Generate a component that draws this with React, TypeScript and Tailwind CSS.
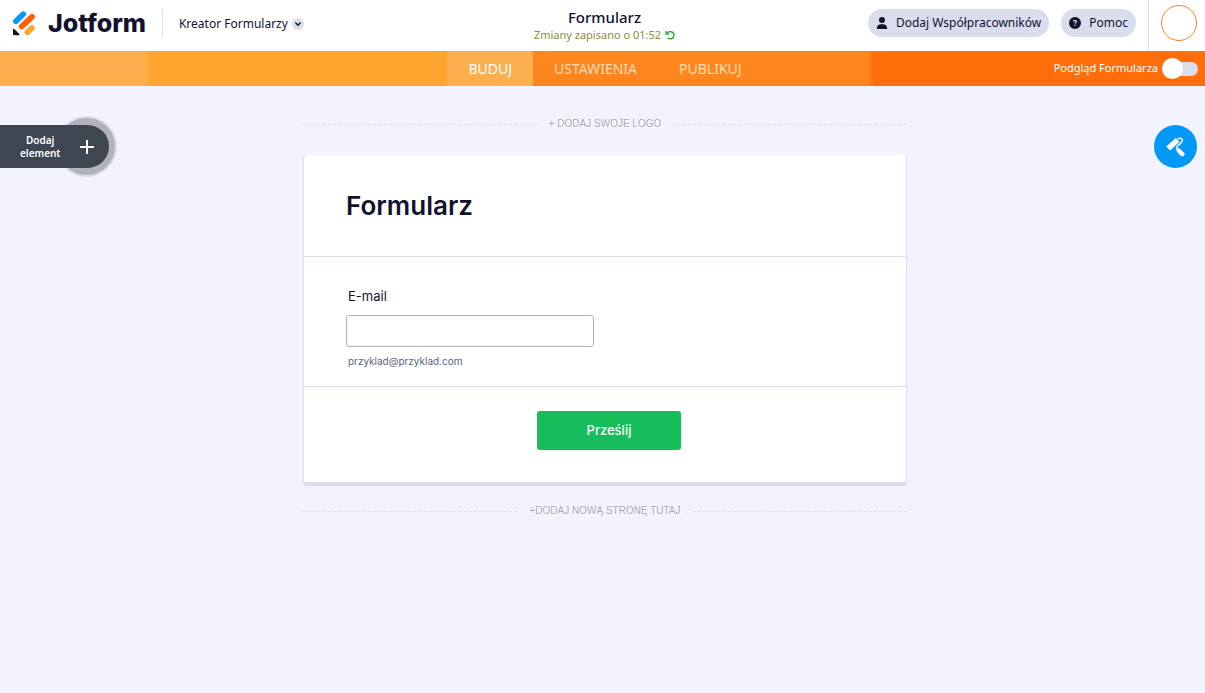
import React, { useState } from "react";
import { FaUser, FaCircleQuestion } from "react-icons/fa6";

const tabs = ["BUDUJ", "USTAWIENIA", "PUBLIKUJ"];

const Logo = () => (
  <a href="#" className="flex items-center gap-3" aria-label="Jotform">
    <svg width="24" height="25" viewBox="0 0 24 25" fill="none">
      <path d="M3.9 10.2 11.3 3.1" stroke="#0099ff" strokeWidth="5.6" strokeLinecap="round" />
      <path d="M9.8 15.4 20 5.8" stroke="#ff6100" strokeWidth="5.8" strokeLinecap="round" />
      <path d="M15.5 21.2 19.9 17" stroke="#ffa32f" strokeWidth="5.8" strokeLinecap="round" />
      <path d="M1 18.6c0-.7.8-1 1.3-.5l5 4.9c.5.5.2 1.3-.5 1.3H2.2c-.7 0-1.2-.5-1.2-1.2z" fill="#12122e" />
    </svg>
    <span className="font-['Inter'] text-[25px] leading-8 font-extrabold text-[#12122e]">Jotform</span>
  </a>
);

const RollerIcon = () => (
  <svg width="20" height="20" viewBox="0 0 20 20" fill="none">
    <path d="M.2 9.6 9.8 1l3.8 3.8L4.2 13.4z" fill="#fff" />
    <path d="M11.6 1.8c2.6-1 4.8-.4 4.8 1.6 0 2.8-5.4 4.4-5.8 7.4-.1 1.2.8 1.9 1.8 2.6" stroke="#fff" strokeWidth="1.5" />
    <path d="M12.8 13.6l3.6 3.6" stroke="#fff" strokeWidth="4.4" strokeLinecap="round" />
  </svg>
);

const DashedAction = ({ label }: { label: string }) => (
  <div className="flex items-center gap-3">
    <span className="flex-1 border-t border-dashed border-[#dadef0]" />
    <button className="font-['Liberation_Sans'] text-[10px] leading-3.5 text-[#a9aab5] [text-shadow:1px_1px_0_#fff]">
      {label}
    </button>
    <span className="flex-1 border-t border-dashed border-[#dadef0]" />
  </div>
);

const App = () => {
  const [active, setActive] = useState("BUDUJ");
  const [preview, setPreview] = useState(false);

  return (
    <div className="min-h-screen bg-[#f3f3fe] font-['Noto_Sans',sans-serif] text-[#12122e]">
      {/* Header */}
      <header className="grid h-[51px] grid-cols-[1fr_auto_1fr] items-center bg-white pr-2 pb-[5px] pl-3">
        <div className="flex items-center gap-4">
          <Logo />
          <span className="h-7 w-px bg-[#dadef0]" />
          <button className="flex items-center gap-1 pt-0.5 text-[12px]">
            Kreator Formularzy
            <span className="flex size-3 items-center justify-center rounded-full bg-[#dadeec]">
              <svg width="8" height="8" viewBox="0 0 8 8" fill="none">
                <path d="M1.4 2.6 4 5.2l2.6-2.6" stroke="#12122e" strokeWidth="1.4" />
              </svg>
            </span>
          </button>
        </div>

        <div className="pt-1 text-center">
          <h1 className="text-[15px] leading-5 font-medium">Formularz</h1>
          <p className="flex items-center gap-1 text-[11px] leading-4 text-[#8d8b3c]">
            Zmiany zapisano o 01:52
            <svg width="10" height="10" viewBox="0 0 10 10" fill="none">
              <path d="M1 1v3h3" stroke="#18bd5b" strokeWidth="1.4" />
              <path d="M1.4 3.6C4 .4 9 1.4 9 5.2 9 8.6 5 9.8 2.6 7.8" stroke="#3c9c50" strokeWidth="1.4" />
            </svg>
          </p>
        </div>

        <div className="flex items-center justify-end gap-3 self-stretch">
          <button className="flex h-7 items-center gap-2 rounded-full bg-[#dadeec] px-2 text-[12px]">
            <FaUser className="size-3" />
            Dodaj Współpracowników
          </button>
          <button className="flex h-7 items-center gap-2 rounded-full bg-[#dadeec] px-2 text-[12px]">
            <FaCircleQuestion className="size-3" />
            Pomoc
          </button>
          <span className="-mb-[5px] w-px self-stretch bg-[#dadeec]" />
          <button className="size-9 rounded-full border border-[#f5831f] bg-white" aria-label="Konto" />
        </div>
      </header>

      {/* Tabs */}
      <div className="grid h-[35px] grid-cols-[1fr_auto_1fr] items-center bg-[linear-gradient(90deg,#fdaf4f_0_12%,#ffa42f_12.5%_44%,#ff861e_44%_72%,#ff6e0b_72.5%)] pr-[7px] pl-3">
        <span />
        <nav className="flex self-stretch">
          {tabs.map((tab) => (
            <button
              key={tab}
              onClick={() => setActive(tab)}
              className={
                tab === active
                  ? "bg-[#fdaf4f] px-[21px] text-[14px] text-white"
                  : "px-[21px] text-[14px] text-[#ffdcb8]"
              }
            >
              {tab}
            </button>
          ))}
        </nav>
        <label className="flex items-center justify-end gap-1 text-[11px] text-white">
          Podgląd Formularza
          <span className="relative flex h-[21px] w-9 items-center">
            <input
              type="checkbox"
              checked={preview}
              onChange={() => setPreview(!preview)}
              className="peer ml-2 h-3.5 w-7 appearance-none rounded-full bg-[#dadeec]"
            />
            <span className="absolute left-0 size-[21px] rounded-full bg-white peer-checked:left-4" />
          </span>
        </label>
      </div>

      {/* Builder */}
      <main className="grid grid-cols-[1fr_604px_1fr] items-start pt-[31px] pl-[5px]">
        <div className="relative mt-2 -ml-[5px] w-[109px]">
          <span className="absolute -top-[9px] -right-2 size-[61px] rounded-full border-2 border-[#dadeec] bg-[#b1b2bd]" />
          <button className="relative flex h-[43px] w-full items-center justify-between rounded-r-full bg-[#3e4652] pr-3.5 pl-5 text-white">
            <span className="text-[10px] leading-[13px] font-semibold">
              Dodaj
              <br />
              element
            </span>
            <svg width="16" height="16" viewBox="0 0 16 16">
              <path d="M8 1v14M1 8h14" stroke="#fff" strokeWidth="2" />
            </svg>
          </button>
        </div>

        <div>
          <DashedAction label="+ DODAJ SWOJE LOGO" />

          <form
            className="mt-6 mb-[18px] rounded-sm border-x border-b-4 border-[#dadeec] bg-white font-['Inter',sans-serif]"
            onSubmit={(e) => e.preventDefault()}
          >
            <div className="border-b border-[#dadeec] px-[42px] pt-[31px] pb-[30px]">
              <h2 className="text-[26px] leading-10 font-semibold">Formularz</h2>
            </div>
            <div className="border-b border-[#dadeec] px-[42px] pt-[29px] pb-[17px]">
              <label htmlFor="email" className="block pl-0.5 text-[13px] leading-5">
                E-mail
              </label>
              <input
                id="email"
                type="email"
                aria-describedby="email-hint"
                className="mt-[9px] block h-8 w-[248px] rounded-[3px] border border-[#b1b2bd] px-2 text-[13px]"
              />
              <p id="email-hint" className="mt-1.5 pl-0.5 text-[10px] leading-4 text-[#57647e]">
                przyklad@przyklad.com
              </p>
            </div>
            <div className="flex justify-center pt-6 pb-8 pl-2">
              <button className="h-[39px] w-36 rounded-[3px] bg-[#18bd5b] text-[13px] font-medium text-white">
                Prześlij
              </button>
            </div>
          </form>

          <DashedAction label="+DODAJ NOWĄ STRONĘ TUTAJ" />
        </div>

        <button
          className="mt-2 mr-2 flex size-[43px] items-center justify-center justify-self-end rounded-full bg-[#0099fa]"
          aria-label="Projektant formularza"
        >
          <RollerIcon />
        </button>
      </main>
    </div>
  );
};

export default App;
